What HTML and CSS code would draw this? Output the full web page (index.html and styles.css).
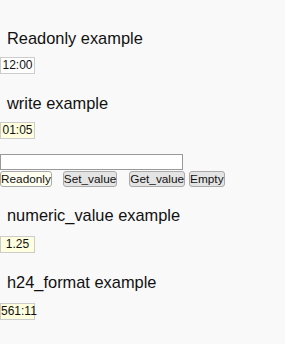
FILE: index.html
```html
<!DOCTYPE html>
<html lang="en">
<head>
    <meta charset="UTF-8">
    <title>Time field examples</title>
    <link rel="stylesheet" href="styles.css">
</head>
<body>

    <!-- Readonly -->
    <div class="example-heading">Readonly example</div>
    <div class="time-box readonly">12:00</div>

    <!-- Write -->
    <div class="example-heading">write example</div>
    <div class="time-box">01:05</div>
    <input type="text" class="log-field">
    <div class="button-row">
        <button class="btn btn-active">Readonly</button>
        <button class="btn btn-set">Set_value</button>
        <button class="btn btn-get">Get_value</button>
        <button class="btn">Empty</button>
    </div>

    <!-- Numeric value -->
    <div class="example-heading tall">numeric_value example</div>
    <div class="time-box">1.25</div>

    <!-- 24h format -->
    <div class="example-heading tall">h24_format example</div>
    <div class="time-box">561:11</div>

</body>
</html>
```

FILE: styles.css
```css
body {
    font-family: "Liberation Sans", Arial, sans-serif;
    background-color: #f9f9f9;
    color: #111;
    margin: 0;
    padding-top: 29px;
}

.example-heading {
    font-size: 16.4px;
    padding-left: 7px;
    margin-bottom: 9px;
}

.example-heading.tall {
    margin-bottom: 11px;
}

.time-box {
    width: 33px;
    height: 15px;
    line-height: 15px;
    font-size: 12px;
    text-align: center;
    border: 1px solid #ccc;
    background-color: #ffffe0;
    margin-bottom: 20px;
}

.time-box.readonly {
    background-color: #fff;
}

.log-field {
    display: block;
    width: 181px;
    height: 14px;
    padding: 0;
    margin: -5px 0 1px 0;
    border: 1px solid #999;
    background: #fff;
}

.button-row {
    display: flex;
    margin-bottom: 19px;
}

.btn {
    font-family: "Liberation Sans", Arial, sans-serif;
    font-size: 11.8px;
    padding: 0;
    height: 16px;
    border: 1px solid #aaa;
    border-radius: 3px;
    background-color: #e4e4e4;
    color: #111;
}

.btn-active {
    background-color: #fffff0;
}

.btn-set {
    margin-left: 11px;
}

.btn-get {
    margin-left: 12px;
    margin-right: 4px;
}
```
